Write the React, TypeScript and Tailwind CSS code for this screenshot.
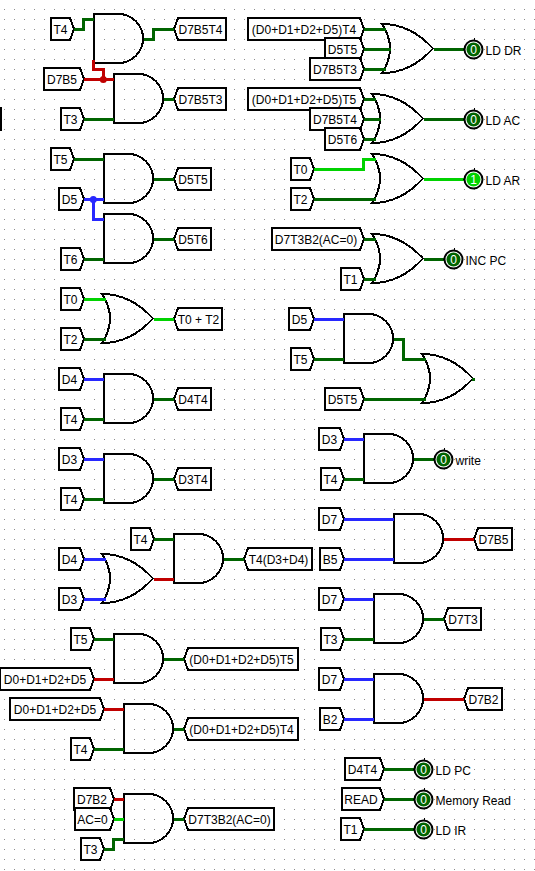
import React from "react";

const G = "#006400";
const L = "#00d200";
const B = "#2828ff";
const R = "#c00000";

type TR = [string, number, number, number]; // text, tip, y, far edge
const inTunnels: TR[] = [
  ["T4", 74, 29, 51], ["D7B5", 84, 79, 44], ["T3", 84, 119, 61], ["T5", 74, 159, 51],
  ["D5", 84, 199, 59], ["T6", 84, 259, 61], ["T0", 84, 299, 61], ["T2", 84, 339, 61],
  ["D4", 84, 379, 59], ["T4", 84, 419, 61], ["D3", 84, 459, 59], ["T4", 84, 499, 61],
  ["T4", 154, 539, 131], ["D4", 84, 559, 59], ["D3", 84, 599, 59], ["T5", 94, 639, 71],
  ["D0+D1+D2+D5", 94, 679, 0], ["D0+D1+D2+D5", 104, 709, 10], ["T4", 94, 749, 71],
  ["D7B2", 114, 799, 74], ["AC=0", 114, 819, 75], ["T3", 104, 849, 81],
  ["(D0+D1+D2+D5)T4", 364, 29, 248], ["D5T5", 364, 49, 325], ["D7B5T3", 364, 69, 310],
  ["(D0+D1+D2+D5)T5", 364, 99, 248], ["D7B5T4", 364, 119, 310], ["D5T6", 364, 139, 325],
  ["T0", 314, 169, 291], ["T2", 314, 199, 291], ["D7T3B2(AC=0)", 364, 239, 272], ["T1", 364, 279, 341],
  ["D5", 314, 319, 289], ["T5", 314, 359, 291], ["D5T5", 364, 399, 325],
  ["D3", 344, 439, 319], ["T4", 344, 479, 321], ["D7", 344, 519, 319], ["B5", 344, 559, 320],
  ["D7", 344, 599, 319], ["T3", 344, 639, 321], ["D7", 344, 679, 319], ["B2", 344, 719, 320],
  ["D4T4", 384, 769, 345], ["READ", 384, 799, 342], ["T1", 364, 829, 341],
];
const outTunnels: TR[] = [
  ["D7B5T4", 174, 29, 226], ["D7B5T3", 174, 99, 226], ["D5T5", 174, 179, 211], ["D5T6", 174, 239, 211],
  ["T0 + T2", 174, 319, 222], ["D4T4", 174, 399, 211], ["D3T4", 174, 479, 211],
  ["T4(D3+D4)", 244, 559, 312], ["(D0+D1+D2+D5)T5", 184, 659, 298], ["(D0+D1+D2+D5)T4", 184, 729, 298],
  ["D7T3B2(AC=0)", 184, 819, 274], ["D7B5", 474, 539, 512], ["D7T3", 444, 619, 481], ["D7B2", 464, 699, 502],
];
const ands: [number, number][] = [
  [94, 39], [114, 99], [104, 179], [104, 239], [104, 399], [104, 479], [174, 559], [114, 659], [124, 729], [124, 819],
  [344, 339], [364, 459], [394, 539], [374, 619], [374, 699],
];
const ors: [number, number][] = [
  [104, 319], [104, 579], [384, 49], [374, 119], [374, 179], [374, 259], [424, 379],
];
const wires: [string, string][] = [
  [G, "74,29 84,29 84,19 94,19"], [G, "144,39 154,39 154,29 174,29"], [R, "94,59 94,69 104,69 104,79"],
  [R, "84,79 114,79"], [G, "84,119 114,119"], [G, "164,99 174,99"],
  [G, "74,159 104,159"], [B, "84,199 104,199"], [B, "94,199 94,219 104,219"], [G, "84,259 104,259"],
  [G, "154,179 174,179"], [G, "154,239 174,239"],
  [L, "84,299 106,299"], [G, "84,339 106,339"], [L, "154,319 174,319"],
  [B, "84,379 104,379"], [G, "84,419 104,419"], [G, "154,399 174,399"],
  [B, "84,459 104,459"], [G, "84,499 104,499"], [G, "154,479 174,479"],
  [G, "154,539 174,539"], [R, "154,579 174,579"], [G, "224,559 244,559"],
  [B, "84,559 106,559"], [B, "84,599 106,599"],
  [G, "94,639 114,639"], [R, "94,679 114,679"], [G, "164,659 184,659"],
  [R, "104,709 124,709"], [G, "94,749 124,749"], [G, "174,729 184,729"],
  [R, "114,799 124,799"], [L, "114,819 124,819"], [G, "104,849 114,849 114,839 124,839"], [G, "174,819 184,819"],
  [G, "364,29 386,29"], [G, "364,49 391,49"], [G, "364,69 386,69"], [G, "434,49 464,49"],
  [G, "364,99 376,99"], [G, "364,119 381,119"], [G, "364,139 376,139"], [G, "424,119 464,119"],
  [L, "314,169 364,169 364,159 376,159"], [G, "314,199 376,199"], [L, "424,179 464,179"],
  [G, "364,239 376,239"], [G, "364,279 376,279"], [G, "424,259 444,259"],
  [B, "314,319 344,319"], [G, "314,359 344,359"], [G, "394,339 404,339 404,359 426,359"], [G, "364,399 426,399"],
  [B, "344,439 364,439"], [G, "344,479 364,479"], [G, "414,459 434,459"],
  [B, "344,519 394,519"], [B, "344,559 394,559"], [R, "444,539 474,539"],
  [B, "344,599 374,599"], [G, "344,639 374,639"], [G, "424,619 444,619"],
  [B, "344,679 374,679"], [B, "344,719 374,719"], [R, "424,699 464,699"],
  [G, "384,769 414,769"], [G, "384,799 414,799"], [G, "364,829 414,829"],
];
const leds: [number, number, string, string][] = [
  [474, 49, "0", "LD DR"], [474, 119, "0", "LD AC"], [474, 179, "1", "LD AR"], [454, 259, "0", "INC PC"],
  [444, 459, "0", "write"], [424, 769, "0", "LD PC"], [424, 799, "0", "Memory Read"], [424, 829, "0", "LD IR"],
];

function dots() {
  const out: string[] = [];
  for (let x = 4; x < 535; x += 10) for (let y = 9; y < 871; y += 10) out.push(`M${x} ${y}h1v1h-1z`);
  return out.join("");
}

export default function App() {
  return (
    <div className="relative w-[535px] h-[871px] overflow-hidden bg-white">
      <svg width={535} height={871} viewBox="0 0 535 871" className="block font-['Liberation_Sans',Arial,sans-serif] text-[12px]">
        <path d={dots()} fill="#8c8c8c" shapeRendering="crispEdges" />
        <rect x={0} y={107} width={2} height={24} fill="#000" shapeRendering="crispEdges" />
        <g shapeRendering="crispEdges" fill="#fff" stroke="#000" strokeWidth={2}>
          {inTunnels.map(([t, tip, y, far], i) => (
            <polygon key={i} points={`${tip},${y} ${tip - 4},${y - 11} ${far},${y - 11} ${far},${y + 11} ${tip - 4},${y + 11}`} />
          ))}
          {outTunnels.map(([t, tip, y, far], i) => (
            <polygon key={i} points={`${tip},${y} ${tip + 4},${y - 11} ${far},${y - 11} ${far},${y + 11} ${tip + 4},${y + 11}`} />
          ))}
        </g>
        <g shapeRendering="crispEdges" fill="none" stroke="#000" strokeWidth={2}>
          {ands.map(([x, c], i) => (
            <path key={i} d={`M${x + 24.5} ${c - 25}H${x}V${c + 24}H${x + 24.5}A24.5 24.5 0 0 0 ${x + 24.5} ${c - 25}Z`} />
          ))}
          {ors.map(([x, c], i) => (
            <path key={i} d={`M${x - 2} ${c - 25}C${x + 16} ${c - 25} ${x + 34} ${c - 17} ${x + 49} ${c - 0.5}C${x + 34} ${c + 16} ${x + 16} ${c + 24} ${x - 2} ${c + 24}Q${x + 14} ${c - 0.5} ${x - 2} ${c - 25}Z`} />
          ))}
        </g>
        <g transform="translate(-0.5 0.5)" shapeRendering="crispEdges" fill="none" strokeWidth={3}>
          {wires.map(([c, p], i) => (
            <polyline key={i} points={p} stroke={c} />
          ))}
        </g>
        <circle cx={103.3} cy={79.5} r={3.5} fill={R} />
        <circle cx={93.3} cy={199.5} r={3.5} fill={B} />
        <rect x={472} y={378} width={3} height={3} fill={G} shapeRendering="crispEdges" />
        {leds.map(([x, y, v, l], i) => (
          <g key={i}>
            <circle cx={x - 0.5} cy={y + 0.5} r={9} fill="#fff" stroke="#000" strokeWidth={2} />
            <path d={`M${x} ${y - 11}v2M${x - 11} ${y}h2`} stroke="#000" strokeWidth={1} shapeRendering="crispEdges" />
            <circle cx={x - 0.5} cy={y + 0.5} r={7} fill={v === "1" ? L : G} />
          </g>
        ))}
        {inTunnels.map(([t, tip, y, far], i) => {
          const inner = tip - 4 - far;
          return (
            <text key={i} x={far + inner / 2} y={y + 5} textAnchor="middle" fill="#000">{t}</text>
          );
        })}
        {outTunnels.map(([t, tip, y, far], i) => (
          <text key={i} x={(tip + far) / 2 + 0.5} y={y + 5} textAnchor="middle" fill="#000">{t}</text>
        ))}
        {leds.map(([x, y, v, l], i) => (
          <React.Fragment key={i}>
            <text x={x - 0.5} y={y + 5} textAnchor="middle" fill="#fff">{v}</text>
            <text x={x + 11.5} y={y + 5.5} fill="#000">{l}</text>
          </React.Fragment>
        ))}
      </svg>
    </div>
  );
}
